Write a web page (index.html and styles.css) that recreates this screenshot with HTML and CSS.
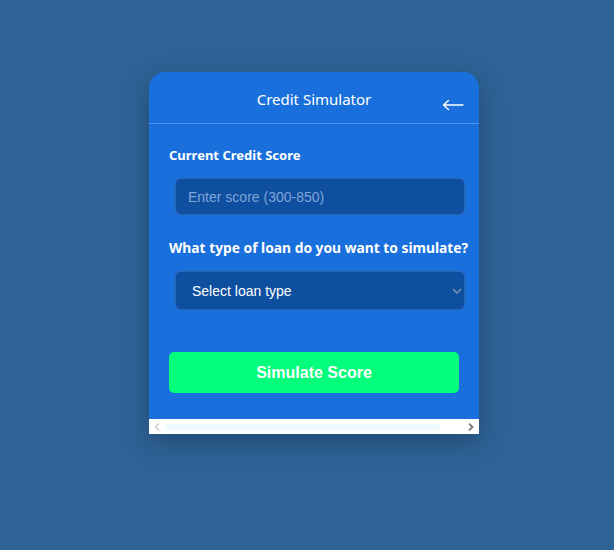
FILE: index.html
```html
<!DOCTYPE html>
<html>
<head>
<meta charset="utf-8">
<link rel="stylesheet" href="styles.css">
</head>
<body>
<div class="stage">
  <div class="card">
    <div class="card-header">
      <h1 class="title">Credit Simulator</h1>
      <svg class="back" width="22" height="12" viewBox="0 0 22 12" aria-hidden="true">
        <path d="M1.5 6 H21 M6.5 1.5 L1.5 6 L6.5 10.5" fill="none" stroke="#fff" stroke-width="1.4" stroke-linecap="round" stroke-linejoin="round"/>
      </svg>
    </div>
    <div class="card-body">
      <label class="label">Current Credit Score</label>
      <input class="field" type="text" placeholder="Enter score (300-850)">
      <label class="label label-2">What type of loan do you want to simulate?</label>
      <div class="select-wrap">
        <select class="field select">
          <option>Select loan type</option>
        </select>
        <svg class="chev" width="10" height="6" viewBox="0 0 10 6" aria-hidden="true">
          <path d="M1 1 L5 5 L9 1" fill="none" stroke="#8c9db8" stroke-width="1.3"/>
        </svg>
      </div>
      <button class="btn">Simulate Score</button>
    </div>
    <div class="hscroll" aria-hidden="true">
      <svg class="sb-arrow" width="6" height="8" viewBox="0 0 6 8">
        <path d="M5 0.5 L1.5 4 L5 7.5" fill="none" stroke="#d6d6d6" stroke-width="1.8"/>
      </svg>
      <div class="sb-track"><div class="sb-thumb"></div></div>
      <svg class="sb-arrow" width="6" height="8" viewBox="0 0 6 8">
        <path d="M1 0.5 L4.5 4 L1 7.5" fill="none" stroke="#7a7a7a" stroke-width="1.8"/>
      </svg>
    </div>
  </div>
</div>
</body>
</html>
```
FILE: styles.css
```css
html, body {
  margin: 0;
  padding: 0;
  background: #2e6396;
  height: 100%;
}
.stage {
  padding: 72px 0 0 149px;
}
.card {
  width: 330px;
  background: #196fdc;
  border-radius: 16px 16px 0 0;
  box-shadow: 0 8px 24px rgba(0, 0, 0, 0.25);
  font-family: "Noto Sans", sans-serif;
  color: #fff;
}
.card-header {
  position: relative;
  height: 51px;
  border-bottom: 1px solid #4b90ee;
  display: flex;
  align-items: center;
  justify-content: center;
}
.title {
  margin: 0;
  font-size: 15px;
  font-weight: 400;
  padding-top: 2px;
}
.back {
  position: absolute;
  right: 15px;
  top: 27px;
}
.card-body {
  padding: 22px 20px 26px 20px;
  display: flex;
  flex-direction: column;
  align-items: flex-start;
}
.label {
  font-size: 13px;
  font-weight: 700;
  line-height: 18px;
  white-space: nowrap;
}
.label-2 {
  margin-top: 24px;
  font-size: 13.8px;
}
.field {
  box-sizing: border-box;
  width: 290px;
  margin: 14px 0 0 6px;
  height: 37px;
  background: #0f4fa0;
  border: 1px solid #2c63ad;
  border-radius: 6px;
  padding: 0 12px;
  font-family: "Liberation Sans", Arial, sans-serif;
  font-size: 14px;
  color: #fff;
  outline: none;
}
.field::placeholder {
  color: #7fa6d8;
}
.select-wrap {
  position: relative;
  display: flex;
}
.select {
  appearance: none;
  -webkit-appearance: none;
  height: 39px;
  padding-left: 16px;
  margin-top: 14px;
}
.chev {
  position: absolute;
  right: 3px;
  top: 31px;
}
.btn {
  margin-top: 42px;
  height: 41px;
  width: 290px;
  border: none;
  border-radius: 5px;
  background: #04fd7a;
  color: #fff;
  font-family: "Liberation Sans", Arial, sans-serif;
  font-size: 16px;
  font-weight: 700;
}
.hscroll {
  height: 15px;
  background: #fff;
  display: flex;
  align-items: center;
  padding: 0 5px 0 5px;
  gap: 5px;
}
.sb-track {
  flex: 1;
  display: flex;
  padding-right: 23px;
}
.sb-thumb {
  flex: 1;
  height: 6px;
  border-radius: 3px;
  background: #eefaff;
}
```
